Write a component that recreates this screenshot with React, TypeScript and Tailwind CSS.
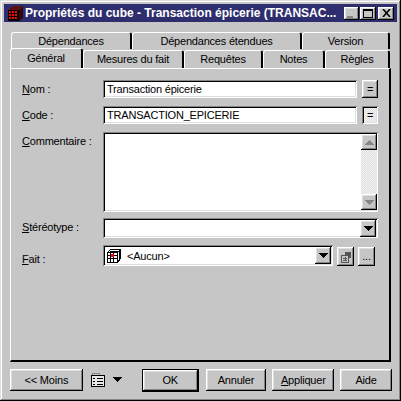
const raised =
  "bg-[#c6c6c6] shadow-[inset_-1px_-1px_0_#000,inset_1px_1px_0_#fff,inset_-2px_-2px_0_#868686,inset_2px_2px_0_#dfdfdf]";
const sunken =
  "bg-white shadow-[inset_1px_1px_0_#868686,inset_-1px_-1px_0_#fff,inset_2px_2px_0_#000,inset_-2px_-2px_0_#dfdfdf]";
const dither =
  "bg-[repeating-conic-gradient(#f4f4f4_0_25%,#dedede_0_50%)] bg-[length:2px_2px]";

function CubeIcon() {
  return (
    <svg className="shrink-0" width="17" height="17" viewBox="0 0 17 17" shapeRendering="crispEdges">
      <path d="M1 5L5 1H16V12L12 16H1Z" fill="#000" />
      <path d="M5 1H16L12 5H1Z" fill="#5a1010" />
      <path d="M12 5L16 1V12L12 16Z" fill="#300808" />
      {[2, 5, 8].map((x) =>
        [6, 9, 12].map((y) => <rect key={`${x}-${y}`} x={x} y={y} width="2" height="2" fill="#ff0000" />),
      )}
    </svg>
  );
}

function GridIcon() {
  return (
    <svg className="shrink-0" width="14" height="14" viewBox="0 0 14 14" shapeRendering="crispEdges">
      <path d="M0.5 3.5L3.5 0.5H13.5V9.5L10.5 13.5H0.5Z" fill="#fff" stroke="#000" />
      <path
        d="M0.5 3.5H10.5V13.5M0.5 6.5H10.5M0.5 9.5H10.5M3.5 3.5V13.5M6.5 3.5V13.5M10.5 3.5L13.5 0.5M2.5 2H12M12 2V11"
        fill="none"
        stroke="#000"
      />
      <rect x="4" y="5" width="3" height="3" fill="#ff0000" />
    </svg>
  );
}

function ListIcon() {
  return (
    <svg width="15" height="16" viewBox="0 0 15 16" shapeRendering="crispEdges">
      <path d="M1.5 3.5V1.5H8.5V3.5" fill="#c6c6c6" stroke="#868686" />
      <rect x="0.5" y="3.5" width="13" height="11" fill="#e8e8e8" stroke="#000" />
      <path d="M2 6.5H4M6 6.5H12M2 9.5H4M6 9.5H12M2 12.5H4M6 12.5H12" stroke="#000" />
    </svg>
  );
}

function PropsIcon() {
  return (
    <svg width="12" height="12" viewBox="0 0 12 12" shapeRendering="crispEdges">
      <path d="M5 1H11V7H8V4H5Z" fill="#555" />
      <rect x="1.5" y="4.5" width="7" height="6.5" fill="#c6c6c6" stroke="#555" />
      <path d="M3 7H7M3 9H7M5 6V10" stroke="#555" />
    </svg>
  );
}

function Arrow({ up, color = "#000" }: { up?: boolean; color?: string }) {
  return (
    <svg width="9" height="5" viewBox="0 0 9 5" shapeRendering="crispEdges">
      <path d={up ? "M4.5 0L9 5H0Z" : "M0 0H9L4.5 5Z"} fill={color} />
    </svg>
  );
}

function Tab({ width, label, active, back }: { width: string; label: string; active?: boolean; back?: boolean }) {
  return (
    <div
      className={`${width} ${
        back ? "h-[17px]" : active ? "h-[20px] z-10 bg-[#c6c6c6]" : "h-[18px] mt-[2px]"
      } flex items-center justify-center rounded-t-[3px] border-t border-l border-t-white border-l-white border-r-2 border-r-black`}
    >
      {label}
    </div>
  );
}

function Row({
  label,
  mark,
  children,
  className,
  labelClass,
}: {
  label: string;
  mark: string;
  children: React.ReactNode;
  className?: string;
  labelClass?: string;
}) {
  return (
    <div className={`flex ${className ?? ""}`}>
      <div className={`w-[81px] shrink-0 leading-[14px] ${labelClass ?? "pt-[2px]"}`}>
        <u>{mark}</u>
        {label}
      </div>
      {children}
    </div>
  );
}

function DropButton() {
  return (
    <div className={`${raised} w-[16px] h-[17px] flex items-center justify-center`}>
      <Arrow />
    </div>
  );
}

export default function App() {
  return (
    <div className="w-[401px] h-[401px] p-[4px] overflow-hidden flex flex-col bg-[#c6c6c6] text-[11px] tracking-[-0.2px] text-black font-['Liberation_Sans',sans-serif] shadow-[inset_-1px_-1px_0_#000,inset_1px_1px_0_#dfdfdf,inset_-2px_-2px_0_#868686,inset_2px_2px_0_#fff]">
      <div className="h-[18px] shrink-0 bg-[#2e2e6e] flex items-center pl-[3px] pr-[3px] text-white">
        <CubeIcon />
        <span className="ml-[1px] font-bold text-[12px] tracking-normal whitespace-nowrap">
          Propriétés du cube - Transaction épicerie (TRANSAC...
        </span>
        <div className="ml-auto flex shrink-0">
          <div className={`${raised} w-[15px] h-[13px] mr-[1px] flex items-end pl-[3px] pb-[2px]`}>
            <div className="w-[6px] h-[2px] bg-[#868686]" />
          </div>
          <div className={`${raised} w-[16px] h-[13px] mr-[2px] flex items-center justify-center`}>
            <div className="w-[10px] h-[9px] border border-t-2 border-black" />
          </div>
          <div className={`${raised} w-[16px] h-[13px] flex items-center justify-center`}>
            <svg width="9" height="8" viewBox="0 0 9 8">
              <path d="M1 0L8 8M8 0L1 8" stroke="#000" strokeWidth="1.6" />
            </svg>
          </div>
        </div>
      </div>

      <div className="pl-[6px] pt-[10px] pr-[5px] flex-1 flex flex-col">
        <div className="flex h-[17px] pl-[1px]">
          <Tab back width="w-[121px]" label="Dépendances" />
          <Tab back width="w-[170px]" label="Dépendances étendues" />
          <Tab back width="w-[88px]" label="Version" />
        </div>
        <div className="flex h-[20px] -mt-[1px]">
          <Tab width="w-[73px]" label="Général" active />
          <Tab width="w-[101px]" label="Mesures du fait" />
          <Tab width="w-[79px]" label="Requêtes" />
          <Tab width="w-[62px]" label="Notes" />
          <Tab width="w-[65px]" label="Règles" />
        </div>

        <div className="h-[294px] w-[381px] pt-[11px] pl-[11px] border-t border-l border-t-white border-l-white border-r-2 border-b-2 border-r-black border-b-black">
          <Row label="om :" mark="N">
            <div className={`${sunken} w-[254px] h-[18px] pl-[4px] leading-[18px]`}>Transaction épicerie</div>
            <div className={`${raised} ml-[5px] w-[16px] h-[18px] flex items-center justify-center`}>=</div>
          </Row>
          <Row label="ode :" mark="C" className="mt-[8px]">
            <div className={`${sunken} w-[254px] h-[18px] pl-[4px] leading-[18px]`}>TRANSACTION_EPICERIE</div>
            <div className={`${sunken} ${dither} ml-[5px] w-[16px] h-[18px] flex items-center justify-center`}>=</div>
          </Row>
          <Row label="ommentaire :" mark="C" className="mt-[8px]">
            <div className={`${sunken} w-[275px] h-[80px] flex justify-end p-[2px] pr-[1px]`}>
              <div className={`${dither} w-[16px] flex flex-col justify-between`}>
                <div className={`${raised} h-[16px] flex items-center justify-center`}>
                  <Arrow up color="#868686" />
                </div>
                <div className={`${raised} h-[16px] flex items-center justify-center`}>
                  <Arrow color="#868686" />
                </div>
              </div>
            </div>
          </Row>
          <Row label="téréotype :" mark="S" className="mt-[6px]">
            <div className={`${sunken} w-[275px] h-[20px] flex justify-end items-center pr-[2px]`}>
              <DropButton />
            </div>
          </Row>
          <Row label="ait :" mark="F" className="mt-[7px] items-start" labelClass="pt-[7px]">
            <div className={`${sunken} w-[230px] h-[21px] flex items-center pl-[4px] pr-[2px]`}>
              <GridIcon />
              <span className="ml-[6px] pt-[1px]">&lt;Aucun&gt;</span>
              <div className="ml-auto">
                <DropButton />
              </div>
            </div>
            <div className={`${raised} ml-[4px] mt-[2px] w-[17px] h-[19px] flex items-center justify-center`}>
              <PropsIcon />
            </div>
            <div className={`${raised} ml-[4px] mt-[2px] w-[17px] h-[19px] flex items-center justify-center`}>...</div>
          </Row>
        </div>

        <div className="mt-[7px] flex items-start">
          <div className={`${raised} w-[73px] h-[22px] flex items-center justify-center`}>&lt;&lt; Moins</div>
          <div className="ml-[8px] mt-[3px]">
            <ListIcon />
          </div>
          <div className="ml-[7px] mt-[8px]">
            <Arrow />
          </div>
          <div className={`${raised} ml-[20px] w-[57px] h-[23px] border border-black flex items-center justify-center`}>OK</div>
          <div className={`${raised} ml-[7px] w-[61px] h-[22px] flex items-center justify-center`}>Annuler</div>
          <div className={`${raised} ml-[6px] w-[62px] h-[22px] flex items-center justify-center`}>
            <span>
              <u>A</u>ppliquer
            </span>
          </div>
          <div className={`${raised} ml-[6px] w-[52px] h-[22px] flex items-center justify-center`}>Aide</div>
        </div>
      </div>
    </div>
  );
}
